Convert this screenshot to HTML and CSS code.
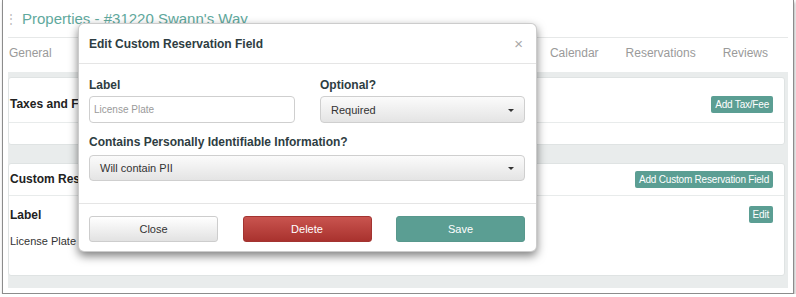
FILE: index.html
```
<!DOCTYPE html>
<html lang="en">
<head>
    <meta charset="UTF-8">
    <title>Properties - #31220 Swann's Way</title>
    <link rel="stylesheet" href="styles.css">
</head>
<body>
    <div class="frame">
        <div class="page">
            <header class="page-header">
                <span class="grip">⋮</span>
                <h1 class="page-title">Properties - #31220 Swann's Way</h1>
            </header>

            <nav class="tabs">
                <a class="tab">General</a>
                <div class="tabs-right">
                    <a class="tab">Calendar</a>
                    <a class="tab">Reservations</a>
                    <a class="tab">Reviews</a>
                </div>
            </nav>

            <div class="panels">
                <section class="card">
                    <div class="card-head head-taxes">
                        <h3>Taxes and Fees</h3>
                        <button class="btn-sm">Add Tax/Fee</button>
                    </div>
                    <div class="card-body body-taxes"></div>
                </section>

                <section class="card">
                    <div class="card-head head-custom">
                        <h3>Custom Reservation Fields</h3>
                        <button class="btn-sm">Add Custom Reservation Field</button>
                    </div>
                    <div class="card-body body-custom">
                        <div class="field-info">
                            <h4>Label</h4>
                            <p>License Plate</p>
                        </div>
                        <button class="btn-sm">Edit</button>
                    </div>
                </section>
            </div>
        </div>

        <!-- モーダル -->
        <div class="modal">
            <div class="modal-header">
                <h2>Edit Custom Reservation Field</h2>
                <span class="modal-close">×</span>
            </div>
            <div class="modal-body">
                <div class="form-row">
                    <div class="form-group">
                        <label>Label</label>
                        <input class="text-input" type="text" placeholder="License Plate">
                    </div>
                    <div class="form-group">
                        <label>Optional?</label>
                        <div class="select">Required</div>
                    </div>
                </div>
                <div class="form-group group-pii">
                    <label>Contains Personally Identifiable Information?</label>
                    <div class="select">Will contain PII</div>
                </div>
            </div>
            <div class="modal-footer">
                <button class="btn btn-close">Close</button>
                <button class="btn btn-delete">Delete</button>
                <button class="btn btn-save">Save</button>
            </div>
        </div>
    </div>
</body>
</html>
```

FILE: styles.css
```
body {
    margin: 0;
    font-family: "Liberation Sans", Arial, sans-serif;
    background-color: #fff;
}

.frame {
    position: relative;
    margin-left: 2px;
    width: 792px;
    height: 294px;
    box-sizing: border-box;
    border: 1px solid #8c8c8c;
    border-top: none;
    padding: 0 5px 5px;
    box-shadow: 1px 2px 3px rgba(0, 0, 0, 0.3);
}

/* ヘッダー */
.page-header {
    height: 37px;
    display: flex;
    align-items: center;
    border-bottom: 1px solid #e6e8e8;
}

.grip {
    width: 17px;
    margin-left: -3px;
    color: #bbb;
    font-size: 12px;
}

.page-title {
    margin: 0;
    font-size: 15px;
    font-weight: normal;
    color: #5fa99d;
}

/* タブ */
.tabs {
    height: 34px;
    box-sizing: border-box;
    padding: 8px 20px 0 1px;
    display: flex;
    justify-content: space-between;
    font-size: 12px;
    line-height: 14px;
    color: #9a9a9a;
}

.tabs-right {
    display: flex;
    gap: 27px;
}

/* パネル */
.panels {
    background-color: #e9ecec;
    padding: 5px 3px 12px 0;
    display: flex;
    flex-direction: column;
    gap: 18px;
}

.card {
    background-color: #fff;
    border: 1px solid #dfe3e3;
    border-radius: 3px;
}

.card-head {
    display: flex;
    justify-content: space-between;
    align-items: center;
    padding: 0 11px 0 1px;
    border-bottom: 1px solid #e8ebeb;
    box-sizing: border-box;
}

.card-head h3 {
    margin: 0;
    font-size: 12px;
    color: #222;
}

.head-taxes {
    height: 45px;
    padding-top: 8px;
}

.head-custom {
    height: 32px;
    padding-bottom: 1px;
}

.body-taxes {
    height: 21px;
}

.body-custom {
    height: 79px;
    box-sizing: border-box;
    padding: 10px 11px 0 1px;
    display: flex;
    justify-content: space-between;
    align-items: flex-start;
}

.field-info h4 {
    margin: 1px 0 0;
    font-size: 12px;
    line-height: 16px;
    color: #222;
}

.field-info p {
    margin: 11px 0 0;
    font-size: 11px;
    line-height: 14px;
    color: #333;
}

.btn-sm {
    height: 17px;
    padding: 0 4px;
    border: none;
    border-radius: 2px;
    background-color: #5b9e93;
    color: #fff;
    font-family: inherit;
    font-size: 10px;
    letter-spacing: -0.2px;
}

/* モーダル */
.modal {
    position: absolute;
    left: 75px;
    top: 23px;
    width: 459px;
    box-sizing: border-box;
    background-color: #fff;
    border: 1px solid rgba(0, 0, 0, 0.2);
    border-radius: 6px;
    box-shadow: 0 4px 10px rgba(0, 0, 0, 0.5);
}

.modal-header {
    height: 39px;
    display: flex;
    justify-content: space-between;
    align-items: center;
    padding: 0 13px 0 10px;
    border-bottom: 1px solid #e5e5e5;
}

.modal-header h2 {
    margin: 0;
    font-size: 12px;
    color: #2e3d42;
}

.modal-close {
    color: #a8a8a8;
    font-size: 15px;
}

.modal-body {
    padding: 13px 11px 22px 10px;
}

.form-row {
    display: grid;
    grid-template-columns: 206px 205px;
    column-gap: 25px;
}

.form-group label {
    display: block;
    font-size: 12px;
    line-height: 16px;
    font-weight: bold;
    color: #2e3d42;
    margin-bottom: 3px;
}

.group-pii {
    margin-top: 11px;
}

.group-pii label {
    margin-bottom: 5px;
}

.text-input {
    display: block;
    width: 100%;
    height: 27px;
    box-sizing: border-box;
    padding: 0 4px;
    border: 1px solid #cfcfcf;
    border-radius: 4px;
    font-family: inherit;
    font-size: 10px;
    outline: none;
}

.text-input::placeholder {
    color: #9a9a9a;
}

.select {
    position: relative;
    height: 27px;
    box-sizing: border-box;
    padding: 0 10px;
    display: flex;
    align-items: center;
    border: 1px solid #cfcfcf;
    border-radius: 4px;
    background: linear-gradient(#fbfbfb, #e4e4e4);
    font-size: 11px;
    color: #333;
}

.group-pii .select {
    height: 26px;
}

.select::after {
    content: "";
    position: absolute;
    right: 10px;
    top: 50%;
    margin-top: -1px;
    border-left: 3px solid transparent;
    border-right: 3px solid transparent;
    border-top: 3px solid #333;
}

.modal-footer {
    display: grid;
    grid-template-columns: repeat(3, 129px);
    justify-content: space-between;
    padding: 12px 11px 9px 10px;
    border-top: 1px solid #e5e5e5;
}

.btn {
    height: 26px;
    border-radius: 3px;
    font-family: inherit;
    font-size: 11px;
    cursor: pointer;
}

.btn-close {
    background: linear-gradient(#ffffff, #e2e2e2);
    border: 1px solid #cdcdcd;
    color: #333;
}

.btn-delete {
    background: linear-gradient(#c9544f, #a9322e);
    border: 1px solid #a33431;
    color: #fff;
}

.btn-save {
    background: #5b9e93;
    border: 1px solid #58988d;
    color: #fff;
}
```
